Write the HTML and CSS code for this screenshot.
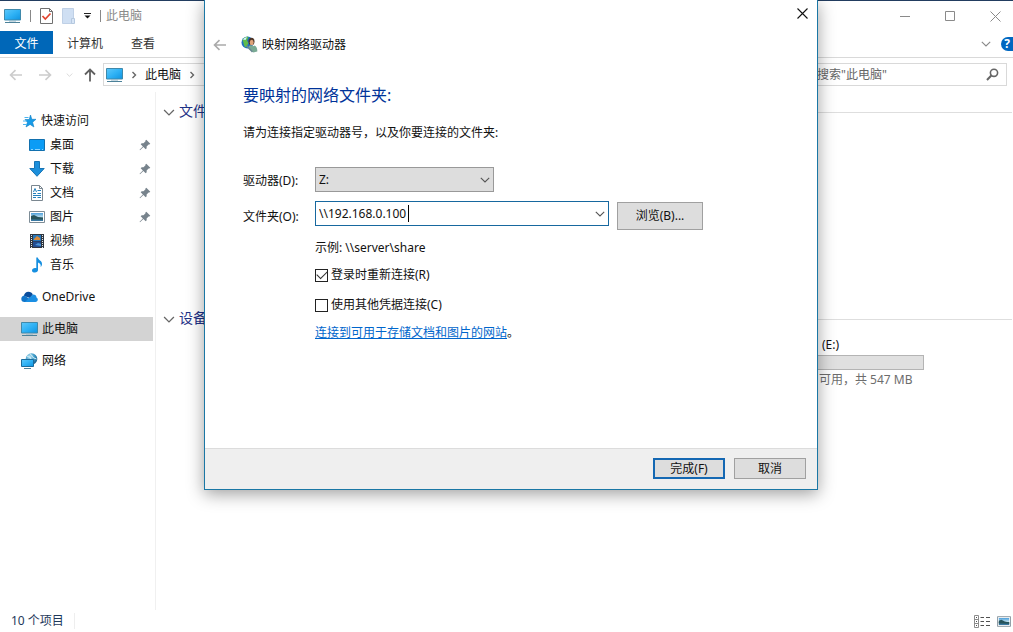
FILE: index.html
```html
<!DOCTYPE html>
<html lang="zh-CN">
<head>
<meta charset="utf-8">
<title>此电脑</title>
<link rel="stylesheet" href="styles.css">
</head>
<body>
<svg class="defs" aria-hidden="true">
  <defs>
    <linearGradient id="screen" x1="0" y1="0" x2="1" y2="1"><stop offset="0" stop-color="#5ec8fa"/><stop offset=".5" stop-color="#2fb2f5"/><stop offset="1" stop-color="#0f93e0"/></linearGradient>
    <linearGradient id="photo" x1="0" y1="0" x2="0" y2="1"><stop offset="0" stop-color="#4b9fdc"/><stop offset=".5" stop-color="#b9dcec"/><stop offset=".6" stop-color="#2b5d66"/><stop offset="1" stop-color="#3e7fae"/></linearGradient>
    <radialGradient id="globe" cx=".35" cy=".3" r=".8"><stop offset="0" stop-color="#b9e4f5"/><stop offset=".5" stop-color="#3f9cc9"/><stop offset="1" stop-color="#0d4f7d"/></radialGradient>
  </defs>
  <symbol id="pc" viewBox="0 0 17 16"><path d="M.5 1.500h16v10.500H.5z" fill="url(#screen)" stroke="#3f89ab"/><path d="M5 13h7" stroke="#8fb4c6"/><path d="M1 14.500h15" stroke="#4c8199"/></symbol>
  <symbol id="pin" viewBox="0 0 12 12"><path d="M7.300.8l4 4-1 .7-.7-.1-2 2 .1 1.800-1 1-2.300-2.300L1 11.200l-.4-.4 3.300-3.400L1.700 5.200l1-1 1.800.1 2-2-.1-.8z" fill="#77838c"/></symbol>
  <symbol id="down" viewBox="0 0 10 6"><path d="M.8.8L5 5 9.200.8" fill="none" stroke="currentColor" stroke-width="1.100"/></symbol>
  <symbol id="right" viewBox="0 0 6 8"><path d="M1.500 1l3 3-3 3" fill="none" stroke="#666" stroke-width="1.400"/></symbol>
  <symbol id="back" viewBox="0 0 14 12"><path d="M6.500 1.200L1.500 6l5 4.800M1.500 6H13" fill="none" stroke="currentColor" stroke-width="1.600"/></symbol>
  <symbol id="picture" viewBox="0 0 16 12"><path d="M.5.5h15v11H.5z" fill="#fff" stroke="#7d8c96"/><path d="M2 2h12v8H2z" fill="url(#photo)"/><path d="M2 5l3-1 4 2 5 1v1.500L2 8z" fill="#27545c"/></symbol>
</svg>

<main class="window">
  <header class="titlebar">
    <svg class="pc"><use href="#pc"/></svg>
    <i class="sep"></i>
    <button class="plain" aria-label="属性"><svg width="13" height="16" viewBox="0 0 13 16"><path d="M.5.5h9l3 3v12H.5z" fill="#fff" stroke="#707070"/><path d="M9.500.5v3h3" fill="none" stroke="#707070"/><path d="M2.500 8l2.800 3L10.500 5.500" fill="none" stroke="#e2442e" stroke-width="1.700"/></svg></button>
    <button class="plain" aria-label="新建文件夹"><svg width="13" height="16" viewBox="0 0 13 16"><path d="M.5.5h11v15H.5z" fill="#cfdff3" stroke="#bfd0e6"/><path d="M9.500 10.500h3v5h-3z" fill="#d7e5f6" stroke="#b5c8df"/></svg></button>
    <button class="plain" aria-label="自定义快速访问工具栏"><svg width="7" height="6" viewBox="0 0 7 6"><path d="M0 .5h7" stroke="#222"/><path d="M.5 2.500h6l-3 3z" fill="#111"/></svg></button>
    <i class="sep"></i>
    <span class="caption">此电脑</span>
    <div class="window-buttons">
      <button class="plain" aria-label="最小化"><svg width="10" height="12" viewBox="0 0 10 12"><path d="M0 6.500h10" stroke="#8a8a8a"/></svg></button>
      <button class="plain" aria-label="最大化"><svg width="10" height="10" viewBox="0 0 10 10"><path d="M.5.5h9v9h-9z" fill="none" stroke="#8a8a8a"/></svg></button>
      <button class="plain" aria-label="关闭"><svg width="11" height="11" viewBox="0 0 11 11"><path d="M.5.5l10 10m0-10l-10 10" stroke="#8a8a8a"/></svg></button>
    </div>
  </header>

  <nav class="ribbon">
    <button class="tab active">文件</button>
    <button class="tab">计算机</button>
    <button class="tab">查看</button>
    <div class="ribbon-end">
      <svg class="chevron"><use href="#down"/></svg>
      <button class="help" aria-label="帮助">?</button>
    </div>
  </nav>

  <div class="addressbar">
    <button class="plain faint" aria-label="后退"><svg class="arrow"><use href="#back"/></svg></button>
    <button class="plain faint" aria-label="前进"><svg class="arrow flip"><use href="#back"/></svg></button>
    <button class="plain faint" aria-label="最近位置"><svg class="small-chevron"><use href="#down"/></svg></button>
    <button class="plain" aria-label="上移"><svg width="12" height="14" viewBox="0 0 12 14"><path d="M1 6.500l5-5 5 5M6 2v11.500" fill="none" stroke="#606060" stroke-width="1.800"/></svg></button>
    <div class="path">
      <svg class="pc"><use href="#pc"/></svg>
      <svg class="crumb"><use href="#right"/></svg>
      <span>此电脑</span>
      <svg class="crumb"><use href="#right"/></svg>
    </div>
    <div class="search">
      <input type="text" aria-label="搜索" placeholder="搜索&quot;此电脑&quot;">
      <svg width="13" height="13" viewBox="0 0 13 13"><circle cx="8" cy="4.800" r="3.600" fill="none" stroke="#666" stroke-width="1.600"/><path d="M5.300 7.500L1 12" stroke="#666" stroke-width="2"/></svg>
    </div>
  </div>

  <div class="body">
    <aside class="tree">
      <div class="node"><svg width="16" height="16" viewBox="0 0 16 16"><path d="M9.500 2l1.300 4.300h4.200l-3.400 2.900 1.300 4.800-3.800-2.600L5 14l1.400-4.700L4 6.500h4.200z" fill="#179be8" stroke="#117fc4" stroke-width=".6"/><path d="M3.500 4.500h4M2 8h4M2 11.500h4" stroke="#4bb4ef"/></svg>快速访问</div>
      <div class="node sub"><svg width="16" height="16" viewBox="0 0 16 16"><path d="M.5 2.500h15v11H.5z" fill="#0c9cf5" stroke="#1270ae"/><path d="M2 12.500h2m2 0h5m2 0h1" stroke="#8bd4ff"/></svg>桌面<svg class="pin"><use href="#pin"/></svg></div>
      <div class="node sub"><svg width="16" height="16" viewBox="0 0 16 16"><path d="M5.500.5h5v7h4.700L8 15.300.8 7.500h4.700z" fill="#1c8fdb" stroke="#1674b5"/></svg>下载<svg class="pin"><use href="#pin"/></svg></div>
      <div class="node sub"><svg width="16" height="16" viewBox="0 0 16 16"><path d="M2.500.5h8l3 3v12h-11z" fill="#fff" stroke="#7b8790"/><path d="M10.500.5v3h3" fill="none" stroke="#7b8790"/><path d="M4.500 7l1.500-3.500L7.500 7M8.500 5.500H12M4 8.500h3m1.500 0H12M4 10.500h8M4 12.500h3m1.500 0H12" fill="none" stroke="#2380bd"/></svg>文档<svg class="pin"><use href="#pin"/></svg></div>
      <div class="node sub"><svg width="16" height="12"><use href="#picture"/></svg>图片<svg class="pin"><use href="#pin"/></svg></div>
      <div class="node sub"><svg width="16" height="16" viewBox="0 0 16 16"><path d="M1 1h14v14H1z" fill="#303740"/><path d="M4 2h8v6H4z" fill="#2877b9"/><path d="M4 8.500h8V14H4z" fill="#234d91"/><path d="M5 6l3-3 3 2v2H5z" fill="#d88a3a"/><path d="M6 12l3-2 3 1v2z" fill="#4a96d9"/><path d="M2.500 2v13M13.500 2v13" stroke="#e4e8ea" stroke-dasharray="1 1"/></svg>视频</div>
      <div class="node sub"><svg width="16" height="16" viewBox="0 0 16 16"><path d="M7.300.5h1.500c.2 2.500 4.300 3 4.200 6.500 0 1.200-.6 2.300-1.400 3 .6-2.400-.5-3.800-2.600-4.500V13c0 1.500-1.300 2.500-3.100 2.500S3 14.700 3 13.400s1.400-2.300 3-2.300c.5 0 .9 0 1.300.2z" fill="#168fe0"/></svg>音乐</div>
      <div class="node spaced"><svg width="17" height="16" viewBox="0 0 17 16"><path d="M3 7c0-2.500 2-4.300 4.500-4.300 2 0 3.500 1 4.300 2.700L9 9z" fill="#0a4d9c"/><path d="M3.500 6.500L13 13H3.500A3.300 3.300 0 0 1 .3 9.700c0-1.800 1.500-3.200 3.200-3.200z" fill="#1175c9"/><path d="M8 9l4-3.600c2.300 0 3.400 1.300 3.500 3 1 .5 1.300 1.300 1.300 2.200 0 1.300-1 2.400-2.400 2.400H4z" fill="#1b8fe3"/></svg>OneDrive</div>
      <div class="node spaced selected"><svg class="pc"><use href="#pc"/></svg>此电脑</div>
      <div class="node spaced"><svg width="17" height="16" viewBox="0 0 17 16"><circle cx="10.500" cy="6" r="5.800" fill="url(#globe)"/><path d="M9 1c3 1 1 3 4 4l2.500 1M6 3l4 2-1 2" stroke="#d3edf5" fill="none"/><path d="M.5 6.500h12v7H.5z" fill="url(#screen)" stroke="#1a6c9c"/><path d="M3 15.500h7" stroke="#4c8199"/></svg>网络</div>
    </aside>
    <section class="content">
      <div class="group"><svg class="group-chevron"><use href="#down"/></svg><h2>文件夹</h2><hr></div>
      <div class="group"><svg class="group-chevron"><use href="#down"/></svg><h2>设备和驱动器</h2><hr></div>
      <div class="drive">
        <div class="drive-name">(E:)</div>
        <div class="usage"></div>
        <div class="drive-info">可用，共 547 MB</div>
      </div>
    </section>
  </div>

  <footer class="status">
    <span>10 个项目</span>
    <div class="views">
      <button class="plain" aria-label="详细信息"><svg width="16" height="13" viewBox="0 0 16 13"><path d="M.5.5h4v12h-4zM.5 4.500h4m-4 4h4" fill="#fff" stroke="#8c8c8c"/><path d="M2 2.500h1m-1 4h1m-1 4h1M6.500 2.500H10m2 0h4m-9.500 4H10m2 0h4m-9.500 4H10m2 0h4" stroke="#505050"/></svg></button>
      <button class="plain" aria-label="大图标"><svg width="14" height="11"><use href="#picture"/></svg></button>
    </div>
  </footer>
</main>

<form class="dialog" role="dialog" aria-labelledby="dialog-title">
  <div class="dialog-close"><button type="button" class="plain" aria-label="关闭"><svg width="11" height="11" viewBox="0 0 11 11"><path d="M.5.5l10 10m0-10l-10 10" stroke="#111" stroke-width="1.100"/></svg></button></div>
  <div class="dialog-title">
    <button type="button" class="plain" aria-label="返回"><svg class="arrow"><use href="#back"/></svg></button>
    <svg width="17" height="17" viewBox="0 0 17 17"><circle cx="6.500" cy="6.500" r="6" fill="#1f72bd"/><path d="M1.500 4C3 1 6 .5 7.500 1L6 4.500 7.500 7 5 11.500C2.500 10.500 3 7 1.500 4z" fill="#5fbd4a"/><path d="M2 3.500C3 2 4.500 1.300 6 1.300L4.500 4z" fill="#d4f2ff"/><ellipse cx="10.500" cy="5.500" rx="3" ry="3.700" fill="#4d3529"/><ellipse cx="10.700" cy="6.500" rx="1.900" ry="2.700" fill="#e0a47b"/><path d="M7.500 13c-.5-2.500 1-3.500 2.500-3.800l2 1 1.500-.7c2 1 3 3 2.800 6l-3.800 1z" fill="#79aa94"/><path d="M5.500 9.500l6 6.500" stroke="#6a8793" stroke-width="1.500"/></svg>
    <span id="dialog-title">映射网络驱动器</span>
  </div>
  <div class="dialog-body">
    <h1>要映射的网络文件夹:</h1>
    <p>请为连接指定驱动器号，以及你要连接的文件夹:</p>
    <div class="fields">
      <label for="drive">驱动器(D):</label>
      <div class="combo drive-combo"><select id="drive"><option>Z:</option></select><svg class="chevron"><use href="#down"/></svg></div>
      <label for="folder">文件夹(O):</label>
      <div class="folder-row">
        <div class="combo folder-combo"><input id="folder" type="text" value="\\192.168.0.100"><i class="caret"></i><svg class="chevron"><use href="#down"/></svg></div>
        <button type="button" class="button browse">浏览(B)...</button>
      </div>
    </div>
    <div class="options">
      <div>示例: \\server\share</div>
      <label class="check"><input type="checkbox" checked>登录时重新连接(R)</label>
      <label class="check"><input type="checkbox">使用其他凭据连接(C)</label>
      <div><a href="#">连接到可用于存储文档和图片的网站</a>。</div>
    </div>
  </div>
  <div class="dialog-footer">
    <button type="button" class="button primary">完成(F)</button>
    <button type="button" class="button">取消</button>
  </div>
</form>
</body>
</html>
```
FILE: styles.css
```css
* { box-sizing: border-box; }
body, input, select, button {
  font-family: "Noto Sans", "Noto Sans CJK SC", sans-serif;
  font-size: 12px;
  line-height: 16px;
  color: #111;
}
body { margin: 0; background: #fff; overflow: hidden; }
h1, h2, p, hr { margin: 0; font-weight: 400; }
svg { display: block; flex: none; }
.defs { position: absolute; width: 0; height: 0; }
.pc { width: 17px; height: 16px; }
.chevron { width: 10px; height: 6px; color: #555; }
.group-chevron { width: 12px; height: 7px; color: #666; }
.small-chevron { width: 7px; height: 4px; }
.crumb { width: 6px; height: 8px; }
.arrow { width: 14px; height: 12px; }
.flip { transform: scaleX(-1); }
.plain { border: 0; padding: 0; background: none; flex: none; }
.faint { color: #ccc; }

.window {
  display: flex;
  flex-direction: column;
  min-height: 100vh;
  border-top: 1px solid #223d60;
}
.titlebar { display: flex; align-items: center; height: 30px; padding: 0 12px 0 4px; gap: 9px; }
.sep { width: 1px; height: 12px; background: #888; }
.caption { color: #8a8a8a; margin-left: -4px; }
.window-buttons { display: flex; align-items: center; gap: 35px; margin-left: auto; }

.ribbon { display: flex; height: 27px; padding-bottom: 3px; border-bottom: 1px solid #d9d9d9; }
.tab { border: 0; background: none; padding: 2px 14px 0; color: #333; }
.tab.active { background: #0067b8; color: #fff; width: 53px; }
.ribbon-end { display: flex; align-items: center; gap: 10px; margin-left: auto; padding-top: 2px; }
.ribbon-end .chevron { color: #888; }
.help {
  width: 12px; height: 14px; padding: 0; border: 0;
  border-radius: 7px 0 0 7px;
  background: #0067c0; color: #fff; font-weight: 700;
  line-height: 14px;
}

.addressbar { display: flex; align-items: center; height: 34px; padding: 0 6px 1px 9px; }
.addressbar > .plain { margin-right: 15px; }
.addressbar > .plain:nth-child(2) { margin-right: 14px; }
.addressbar > .plain:nth-child(3) { margin-right: 11px; }
.addressbar > .plain:nth-child(4) { margin-right: 7px; }
.path {
  display: flex; align-items: center; flex: 1; height: 23px;
  padding-left: 2px; gap: 8px; border: 1px solid #d9d9d9;
}
.search {
  display: flex; align-items: center; width: 198px; height: 23px;
  margin-left: 8px; padding: 0 7px; border: 1px solid #d9d9d9;
}
.search input { flex: 1; min-width: 0; border: 0; outline: 0; background: none; padding: 0; }
.search input::placeholder { color: #666; opacity: 1; }

.body { display: flex; flex: 1; }
.tree { width: 156px; padding: 17px 2px 0 0; border-right: 1px solid #f0f0f0; }
.node { display: flex; align-items: center; height: 24px; padding: 0 2px 0 21px; gap: 4px; }
.node.sub { padding-left: 29px; gap: 5px; }
.node.spaced { margin-top: 8px; }
.node.selected { background: #d3d3d3; }
.node .pin { width: 12px; height: 12px; margin-left: auto; }
.content { flex: 1; padding: 10px 1px 0 7px; }
.group { display: flex; align-items: center; height: 20px; gap: 4px; }
.group + .group { margin-top: 187px; }
.group h2 { font-size: 14px; line-height: 20px; padding-bottom: 2px; color: #1e3287; }
.group hr { flex: 1; border: 0; border-top: 1px solid #dedede; }
.drive { width: 204px; margin: 6px 88px 0 auto; }
.drive-name { padding-left: 102px; line-height: 20px; }
.usage { height: 15px; background: #e0e0e0; border: 1px solid #b4b4b4; }
.drive-info { padding-left: 99px; line-height: 20px; color: #6d6d6d; white-space: nowrap; }

.status { display: flex; align-items: center; height: 22px; padding: 0 2px 0 11px; color: #1e395b; }
.status > span { padding-right: 10px; border-right: 1px solid #eee; }
.views { display: flex; align-items: center; gap: 7px; margin-left: auto; }

.dialog {
  position: absolute;
  top: 0;
  left: 204px;
  width: 614px;
  background: #fff;
  border: 1px solid #1a77a5;
  border-top: 0;
  box-shadow: 0 4px 16px rgba(0, 0, 0, .38);
}
.dialog-close { display: flex; justify-content: flex-end; padding: 8px 9px 0 0; height: 32px; align-items: flex-start; }
.dialog-title { display: flex; align-items: center; height: 25px; padding-left: 8px; }
.dialog-title .plain { color: #aaa; margin-right: 14px; }
.dialog-title span { margin-left: 4px; }
.dialog-body { padding: 26px 38px 107px; }
.dialog h1 { font-size: 16px; line-height: 24px; color: #003399; }
.dialog p { margin-top: 18px; }
.fields { display: grid; grid-template-columns: 72px 1fr; row-gap: 9px; margin-top: 26px; align-items: center; }
.fields label { padding-top: 3px; }
.combo { display: flex; align-items: center; position: relative; height: 25px; border: 1px solid #999; }
.combo .chevron { position: absolute; right: 3px; top: 9px; pointer-events: none; }
.combo select, .combo input { appearance: none; width: 100%; height: 100%; border: 0; outline: 0; padding: 0 20px 0 3px; background: none; }
.drive-combo { width: 179px; background: #ddd; }
.folder-row { display: flex; gap: 8px; height: 28px; }
.folder-combo { width: 294px; border-color: #17689f; }
.caret { position: absolute; left: 92px; top: 3px; width: 1px; height: 17px; background: #000; }
.button { height: 21px; width: 72px; padding: 0; border: 1px solid #a0a0a0; background: #ddd; }
.button.browse { height: 28px; width: 86px; margin-top: 1px; }
.button.primary { border: 2px solid #1468b3; }
.options { padding: 11px 0 0 72px; }
.check { display: flex; align-items: center; gap: 3px; margin: 11px 0 14px; }
.check + .check { margin-bottom: 12px; }
.check input {
  appearance: none; display: grid; place-items: center;
  width: 13px; height: 13px; margin: 0; border: 1px solid #222; background: #fff;
}
.check input:checked::before {
  content: ""; width: 9px; height: 5px;
  border: solid #333; border-width: 0 0 1px 1px;
  transform: rotate(-45deg) translate(1px, -1px);
}
.options a { color: #0066cc; }
.dialog-footer {
  display: flex; justify-content: flex-end; gap: 9px;
  padding: 9px 11px 10px; border-top: 1px solid #dcdcdc; background: #efefef;
}
```
